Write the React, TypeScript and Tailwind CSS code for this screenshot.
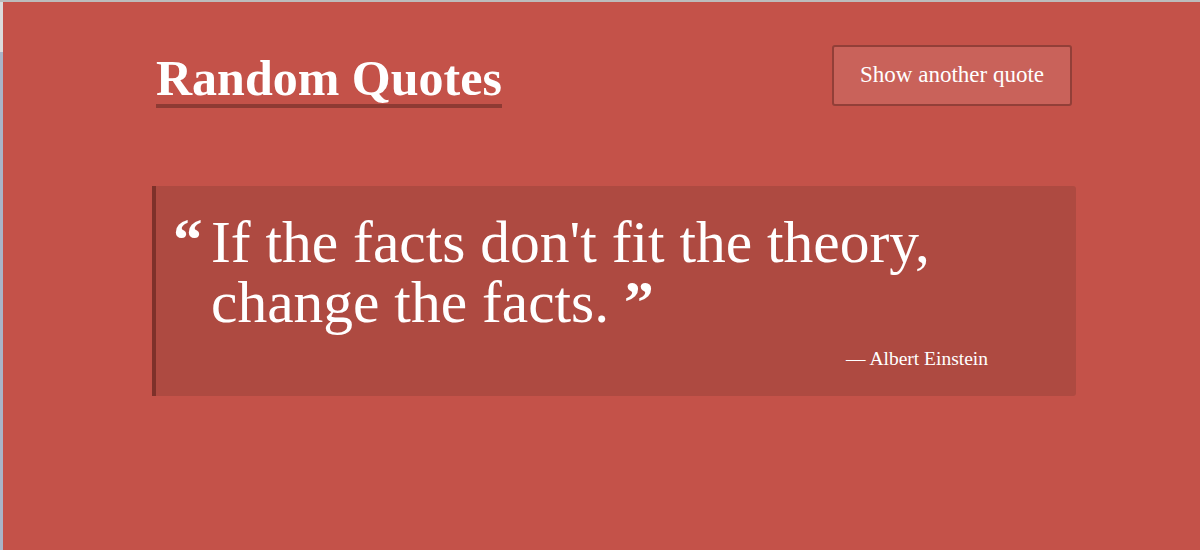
import React from "react"

const serif = { fontFamily: '"Liberation Serif", "Times New Roman", serif' }

export default function App() {
  return (
    <div className="w-[1200px] h-[550px] flex flex-col bg-[#c45249]" style={serif}>
      <div className="h-[2px] bg-[#bcbcbc]" />
      <div className="flex flex-1">
        {/* window edge */}
        <div className="w-[3px] flex flex-col">
          <div className="h-[50px] bg-[#dcdcdc]" />
          <div className="flex-1 bg-[#a9b4c7]" />
        </div>

        <main className="flex-1 pl-[149px] pt-[43px]">
          <header className="flex items-start justify-between w-[916px] ml-[4px]">
            <h1 className="mt-[8px] text-[50px] leading-[50px] font-bold text-white pb-[1px] border-b-4 border-[#8e3a33]">
              Random Quotes
            </h1>
            <button className="w-[240px] h-[61px] flex items-center justify-center rounded-[3px] border-2 border-[#923f38] bg-[#c9625a] text-white text-[23px]">
              Show another quote
            </button>
          </header>

          <QuoteCard
            text="If the facts don't fit the theory,"
            rest="change the facts."
            author="Albert Einstein"
          />
        </main>
      </div>
    </div>
  )
}

function QuoteCard({ text, rest, author }: { text: string; rest: string; author: string }) {
  return (
    <section className="mt-[78px] w-[924px] rounded-r-[3px] border-l-4 border-[#7e312a] bg-[#ae4a41] pl-[17px] pt-[26px] pb-[25px] pr-[88px]">
      <div className="flex text-white">
        <span className="w-[38px] shrink-0 text-[59px] leading-[57px] font-bold">“</span>
        <p className="text-[59.5px] leading-[60px]">
          {text}
          <br />
          {rest} <span className="font-bold">”</span>
        </p>
      </div>
      <p className="mt-[15px] text-right text-[19.5px] leading-[24px] text-white">— {author}</p>
    </section>
  )
}
